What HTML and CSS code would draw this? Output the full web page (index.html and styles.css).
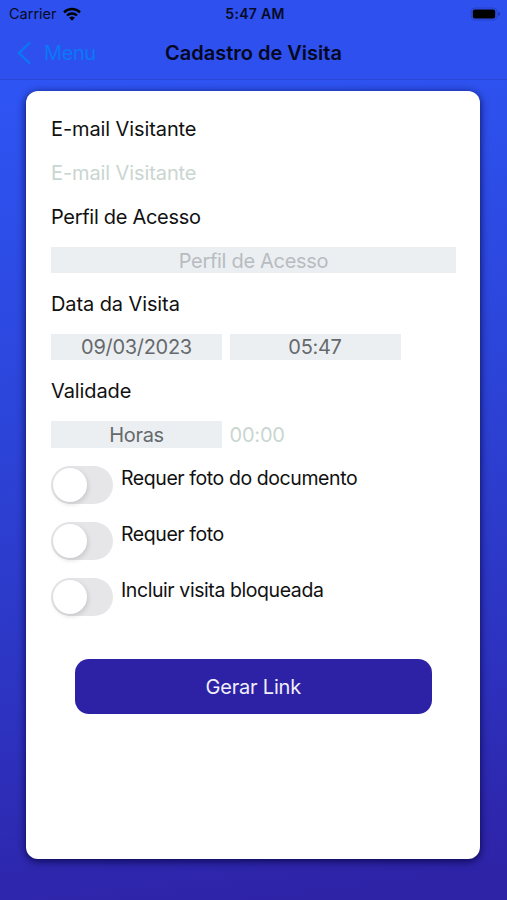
FILE: index.html
```html
<!DOCTYPE html>
<html lang="pt-BR">
<head>
  <meta charset="UTF-8" />
  <meta name="viewport" content="width=device-width, initial-scale=1" />
  <title>Cadastro de Visita</title>
  <link rel="stylesheet" href="styles.css">
</head>
<body>
  <header class="top">
    <div class="status-bar">
      <div class="carrier">
        <span>Carrier</span>
        <svg class="wifi" viewBox="0 0 18 14" width="18" height="14">
          <g fill="none" stroke="#000" stroke-width="2.4">
            <path d="M1 5.3a11.5 11.5 0 0 1 16 0" />
            <path d="M4 8.5a7.2 7.2 0 0 1 10 0" />
          </g>
          <path d="M9 13.7l-2.8-2.9a4 4 0 0 1 5.6 0z" />
        </svg>
      </div>
      <span class="time">5:47 AM</span>
      <svg class="battery" viewBox="0 0 31 14" width="31" height="14">
        <rect x="1.2" y="1" width="25.8" height="12" rx="3.5" fill="none" stroke="#2740c4" stroke-width="1" />
        <rect x="2.8" y="2.6" width="22.4" height="8.8" rx="2" />
        <path d="M28.4 5v4q1.6-.5 1.6-2t-1.6-2z" fill="#1c2f98" />
      </svg>
    </div>
    <nav class="nav-bar">
      <a class="back" href="#">
        <svg viewBox="0 0 16 24" width="16" height="24">
          <path d="M14 1.5L3 12l11 10.5" fill="none" stroke="#0a78f6" stroke-width="2.4" />
        </svg>
        <span>Menu</span>
      </a>
      <h1>Cadastro de Visita</h1>
    </nav>
  </header>

  <main class="content">
    <form class="card">
      <label for="email">E-mail Visitante</label>
      <input type="text" id="email" placeholder="E-mail Visitante" />

      <label class="perfil">Perfil de Acesso</label>
      <div class="field placeholder perfil">Perfil de Acesso</div>

      <label class="low">Data da Visita</label>
      <div class="row">
        <div class="field half">09/03/2023</div>
        <div class="field half">05:47</div>
      </div>

      <label class="low">Validade</label>
      <div class="row">
        <div class="field half tall">Horas</div>
        <input class="hours tall" type="text" placeholder="00:00" />
      </div>

      <div class="switches">
        <div class="switch-row">
          <span class="switch"></span>
          <span>Requer foto do documento</span>
        </div>
        <div class="switch-row">
          <span class="switch"></span>
          <span>Requer foto</span>
        </div>
        <div class="switch-row">
          <span class="switch"></span>
          <span>Incluir visita bloqueada</span>
        </div>
      </div>

      <button type="button">Gerar Link</button>
    </form>
  </main>
</body>
</html>
```

FILE: styles.css
```css
* { box-sizing: border-box; }
body {
  margin: 0;
  height: 900px;
  display: flex;
  flex-direction: column;
  overflow: hidden;
  background: linear-gradient(172deg, #2e54f3 10%, #2c44d8 45%, #2d32bf 75%, #2e22a6 98%);
  font-family: Inter, sans-serif;
  font-size: 20px;
  letter-spacing: -0.1px;
  color: #111;
}
.top {
  height: 80px;
  background: #2e50ef;
  border-bottom: 1px solid #2a48d6;
}
.status-bar {
  display: grid;
  grid-template-columns: 1fr auto 1fr;
  align-items: center;
  height: 27px;
  padding: 0 6px 0 9px;
  font-size: 14.5px;
  letter-spacing: 0;
  color: #060a25;
}
.carrier {
  display: flex;
  align-items: center;
  gap: 6px;
}
.time {
  font-weight: 600;
  font-size: 14px;
  letter-spacing: 0.3px;
}
.battery { justify-self: end; }
.nav-bar {
  display: grid;
  grid-template-columns: 1fr auto 1fr;
  align-items: center;
  height: 51px;
  padding: 0 16px;
}
.back {
  display: flex;
  align-items: center;
  gap: 12px;
  color: #0a78f6;
  font-size: 20px;
  letter-spacing: -0.4px;
  text-decoration: none;
}
h1 {
  margin: 0;
  font-size: 20px;
  font-weight: 600;
  letter-spacing: 0;
  color: #030720;
}
.content {
  flex: 1;
  padding: 11px 27px 41px 26px;
}
.card {
  display: flex;
  flex-direction: column;
  gap: 17.5px;
  height: 768px;
  padding: 25.4px 24px 0 25px;
  background: #fff;
  border-radius: 12px;
  box-shadow: 0 2px 8px rgba(5, 0, 60, 0.85);
}
label,
input,
.field {
  height: 26px;
  line-height: 26px;
}
label { white-space: nowrap; }
.perfil { letter-spacing: -0.3px; }
.perfil,
.low { line-height: 28px; }
input {
  width: 100%;
  padding: 0;
  border: none;
  outline: none;
  background: transparent;
  font-family: inherit;
  font-size: 20px;
  letter-spacing: inherit;
}
input::placeholder {
  color: #c9d6cf;
  opacity: 1;
}
.field {
  background: #ebeff2;
  color: #66696c;
  text-align: center;
  letter-spacing: -0.3px;
}
.placeholder { color: #b8bcc0; }
.row {
  display: flex;
  gap: 7.5px;
}
.half { width: 171px; }
.tall {
  height: 27px;
  line-height: 28px;
}
.hours {
  width: 170px;
  padding-top: 2px;
  letter-spacing: -0.2px;
}
.switches {
  display: flex;
  flex-direction: column;
  gap: 18px;
  margin-top: 1px;
  font-size: 19.5px;
  letter-spacing: -0.42px;
}
.switch-row {
  display: flex;
  gap: 8px;
  height: 38px;
  line-height: 25px;
}
.switch {
  width: 62px;
  height: 38px;
  padding: 2px;
  border-radius: 19px;
  background: #e6e6e9;
}
.switch::before {
  content: "";
  display: block;
  width: 34px;
  height: 34px;
  border-radius: 50%;
  background: #fff;
  box-shadow: 1px 2px 5px rgba(0, 0, 0, 0.15);
}
button {
  height: 55px;
  margin: 25px 24.5px 0 24px;
  padding: 2px 0 0;
  border: none;
  border-radius: 14px;
  background: #2d22a5;
  color: #f0effa;
  font-family: inherit;
  font-size: 20px;
  letter-spacing: -0.2px;
}
```
